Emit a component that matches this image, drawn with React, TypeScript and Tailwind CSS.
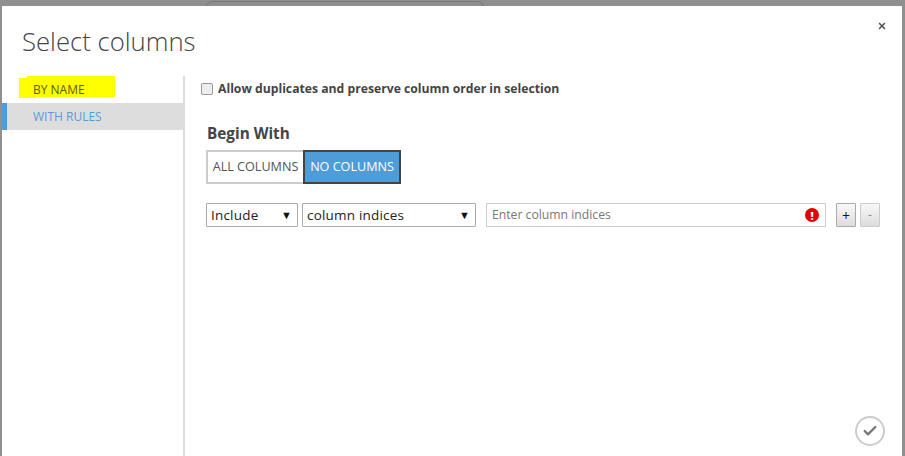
import { Check, X } from 'lucide-react'

export default function App() {
  return (
    <div className="h-[456px] w-[905px] overflow-hidden bg-[#8f8f8f] pl-[2px] pr-[3px] font-['Open_Sans',sans-serif]">
      {/* page behind the modal, only the top of a search box shows */}
      <div className="h-[6px] overflow-hidden pl-[203px] pt-[1px]">
        <div className="h-[12px] w-[280px] rounded-t-[8px] border border-[#777]" />
      </div>
      <div className="relative flex h-[450px] flex-col bg-white">
        <div className="flex h-[70px] items-start justify-between">
          <h1 className="ml-[20px] mt-[18px] text-[25.7px] font-light leading-[36px] text-[#444]">Select columns</h1>
          <X className="mr-[15px] mt-[15px] h-[10px] w-[10px] text-[#555]" strokeWidth={4} />
        </div>

        <div className="flex flex-1">
          <div className="w-[183px] border-r-2 border-[#ddd]">
            <div className="relative h-[27px]">
              <svg className="absolute left-[17px] top-0" width="96" height="22" viewBox="0 0 96 22">
                <polygon points="8,0 96,0 96,21 17,21 17,22 0,22 0,2 8,2" fill="#ffff00" />
              </svg>
              <span className="relative ml-[31px] text-[12px] leading-[27px] text-[#5a5a00]">BY NAME</span>
            </div>
            <div className="h-[27px] border-l-[5px] border-[#4e9cd8] bg-[#ddd] pl-[26px] text-[12px] leading-[27px] text-[#5b9bd5]">
              WITH RULES
            </div>
          </div>

          <div className="relative flex-1 pl-[21px] pr-[22px]">
            <label className="-ml-[5px] mt-[4px] flex h-[18px] items-center gap-[5px] text-[12.2px] font-bold text-[#444]">
              <span className="h-[12px] w-[12px] rounded-[2px] border border-[#999] bg-[#eee]" />
              Allow duplicates and preserve column order in selection
            </label>

            <div className="mt-[25px] pl-[1px] text-[15.3px] font-bold leading-[20px] text-[#444]">Begin With</div>
            <div className="mt-[7px] flex h-[34px] text-[12.6px]">
              <div className="flex w-[97px] items-center justify-center border-2 border-r-0 border-[#ccc] text-[#555]">ALL COLUMNS</div>
              <div className="flex w-[98px] items-center justify-center border-2 border-[#444] bg-[#4e9cd8] text-white">NO COLUMNS</div>
            </div>

            <div className="mt-[19px] flex h-[24px] items-stretch text-[13.5px] tracking-[0.2px]">
              <div className="flex w-[92px] items-center justify-between rounded-[1px] border border-[#aaa] pl-[4px] pr-[5px] text-[#222]">
                Include
                <span className="text-[11px] text-[#111]">▼</span>
              </div>
              <div className="ml-[4px] flex w-[174px] items-center justify-between rounded-[1px] border border-[#aaa] pl-[4px] pr-[5px] text-[#222]">
                column indices
                <span className="text-[11px] text-[#111]">▼</span>
              </div>
              <div className="ml-[10px] flex w-[340px] items-center justify-between border border-[#ccc] pl-[5px] pr-[6px] text-[12.2px] tracking-normal text-[#777]">
                Enter column indices
                <span className="flex h-[14px] w-[14px] items-center justify-center rounded-full bg-[#e60000] text-[11px] font-extrabold leading-none text-white">!</span>
              </div>
              <div className="ml-[10px] flex w-[20px] items-center justify-center rounded-[1px] border border-[#aaa] bg-gradient-to-b from-[#f8f8f8] to-[#ddd] text-[14px] text-[#111]">+</div>
              <div className="ml-[4px] flex w-[20px] items-center justify-center rounded-[1px] border border-[#ccc] bg-gradient-to-b from-[#f8f8f8] to-[#ddd] text-[12px] text-[#888]">-</div>
            </div>

            <div className="absolute bottom-[10px] right-[17px] flex h-[30px] w-[30px] items-center justify-center rounded-full border-2 border-[#ccc]">
              <Check className="h-[16px] w-[16px] text-[#777]" strokeWidth={3.5} />
            </div>
          </div>
        </div>
      </div>
    </div>
  )
}
